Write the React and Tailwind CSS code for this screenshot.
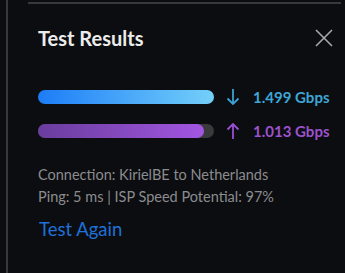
export default function App() {
  return (
    <div className="w-[345px] h-[273px] bg-[#0c0d10] flex overflow-hidden" style={{ fontFamily: "Lato, sans-serif" }}>
      {/* left edge */}
      <div className="w-[2px] ml-[6px] bg-[#37383b] shrink-0"></div>

      <div className="flex-1 flex flex-col">
        <div className="h-[2px] mt-[2px] ml-[20px] mr-[4px] bg-[#37383b]"></div>

        {/* header */}
        <div className="flex items-center justify-between pl-[30px] pr-[11px] mt-[22px]">
          <h2 className="text-[20px] font-bold text-[#ececec] leading-[24px]">
            Test Results
          </h2>
          <svg width="20" height="20" viewBox="0 0 20 20" className="text-[#a8a9ad]">
            <path d="M2 2 L18 18 M18 2 L2 18" stroke="currentColor" strokeWidth="1.6" />
          </svg>
        </div>

        {/* bars */}
        <div className="flex flex-col gap-[20px] pl-[30px] mt-[40px]">
          <div className="flex items-center h-[14px]">
            <div className="w-[176px] h-[14px] rounded-full bg-gradient-to-r from-[#1c7cf6] to-[#74cff9]"></div>
            <svg width="14" height="18" viewBox="0 0 14 18" className="ml-[12px] text-[#3aa2d4]">
              <path d="M7 1 V16 M1.5 10.5 L7 16 L12.5 10.5" stroke="currentColor" strokeWidth="1.8" fill="none" />
            </svg>
            <span className="ml-[13px] text-[15px] font-bold text-[#3ea6d6]">1.499 Gbps</span>
          </div>
          <div className="flex items-center h-[14px]">
            <div className="w-[176px] h-[14px] rounded-full bg-[#3a3a3c] flex">
              <div className="w-[166px] h-[14px] rounded-full bg-gradient-to-r from-[#6a3d9e] to-[#a256e2]"></div>
            </div>
            <svg width="14" height="18" viewBox="0 0 14 18" className="ml-[12px] text-[#9a4fd2]">
              <path d="M7 17 V2 M1.5 7.5 L7 2 L12.5 7.5" stroke="currentColor" strokeWidth="1.8" fill="none" />
            </svg>
            <span className="ml-[13px] text-[15px] font-bold text-[#9b52cc]">1.013 Gbps</span>
          </div>
        </div>

        {/* details */}
        <div className="pl-[30px] mt-[26px] text-[14.5px] leading-[22px] text-[#8b8c8f]">
          <p>Connection: KirielBE to Netherlands</p>
          <p>Ping: 5 ms | ISP Speed Potential: 97%</p>
        </div>

        <button className="self-start ml-[31px] mt-[9px] text-[18.5px] text-[#1f70d8] leading-[24px]">
          Test Again
        </button>
      </div>
    </div>
  );
}
